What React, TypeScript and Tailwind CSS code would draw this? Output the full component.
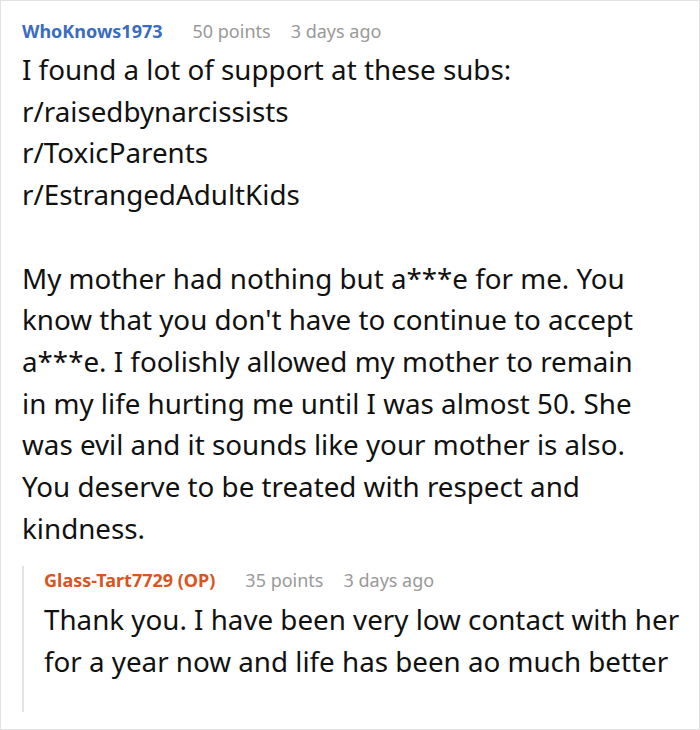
import React from 'react'

const App = () => {
    return (
        <div className="w-[700px] h-[730px] bg-white border border-[#e2e2e2] pl-[21px] pr-[18px] pt-[16px] font-['Noto_Sans',sans-serif] text-[#111]">
            <div className="flex items-center gap-[30px] leading-[28px]">
                <span className="text-[18px] font-bold text-[#3a6cbf]">WhoKnows1973</span>
                <span className="text-[18px] text-[#999]">50 points</span>
                <span className="text-[18px] text-[#999] -ml-[10px]">3 days ago</span>
            </div>
            <p className="mt-[4px] pr-[20px] text-[27.75px] leading-[41.7px]">
                I found a lot of support at these subs:<br />
                r/raisedbynarcissists<br />
                r/ToxicParents<br />
                r/EstrangedAdultKids<br />
                <br />
                My mother had nothing but a***e for me. You know that you don&apos;t have to continue to accept a***e. I foolishly allowed my mother to remain in my life hurting me until I was almost 50. She was evil and it sounds like your mother is also. You deserve to be treated with respect and kindness.
            </p>
            <div className="mt-[29px] border-l-2 border-[#e3e3e3] pl-[20px] pb-[29px]">
                <div className="-mt-[12px] flex items-center gap-[30px] leading-[28px]">
                    <span className="text-[18px] font-bold text-[#d9541e]">Glass-Tart7729 (OP)</span>
                    <span className="text-[18px] text-[#999]">35 points</span>
                    <span className="text-[18px] text-[#999] -ml-[10px]">3 days ago</span>
                </div>
                <p className="mt-[5px] text-[27.75px] leading-[41.7px]">
                    Thank you. I have been very low contact with her for a year now and life has been ao much better
                </p>
            </div>
        </div>
    )
}

export default App
